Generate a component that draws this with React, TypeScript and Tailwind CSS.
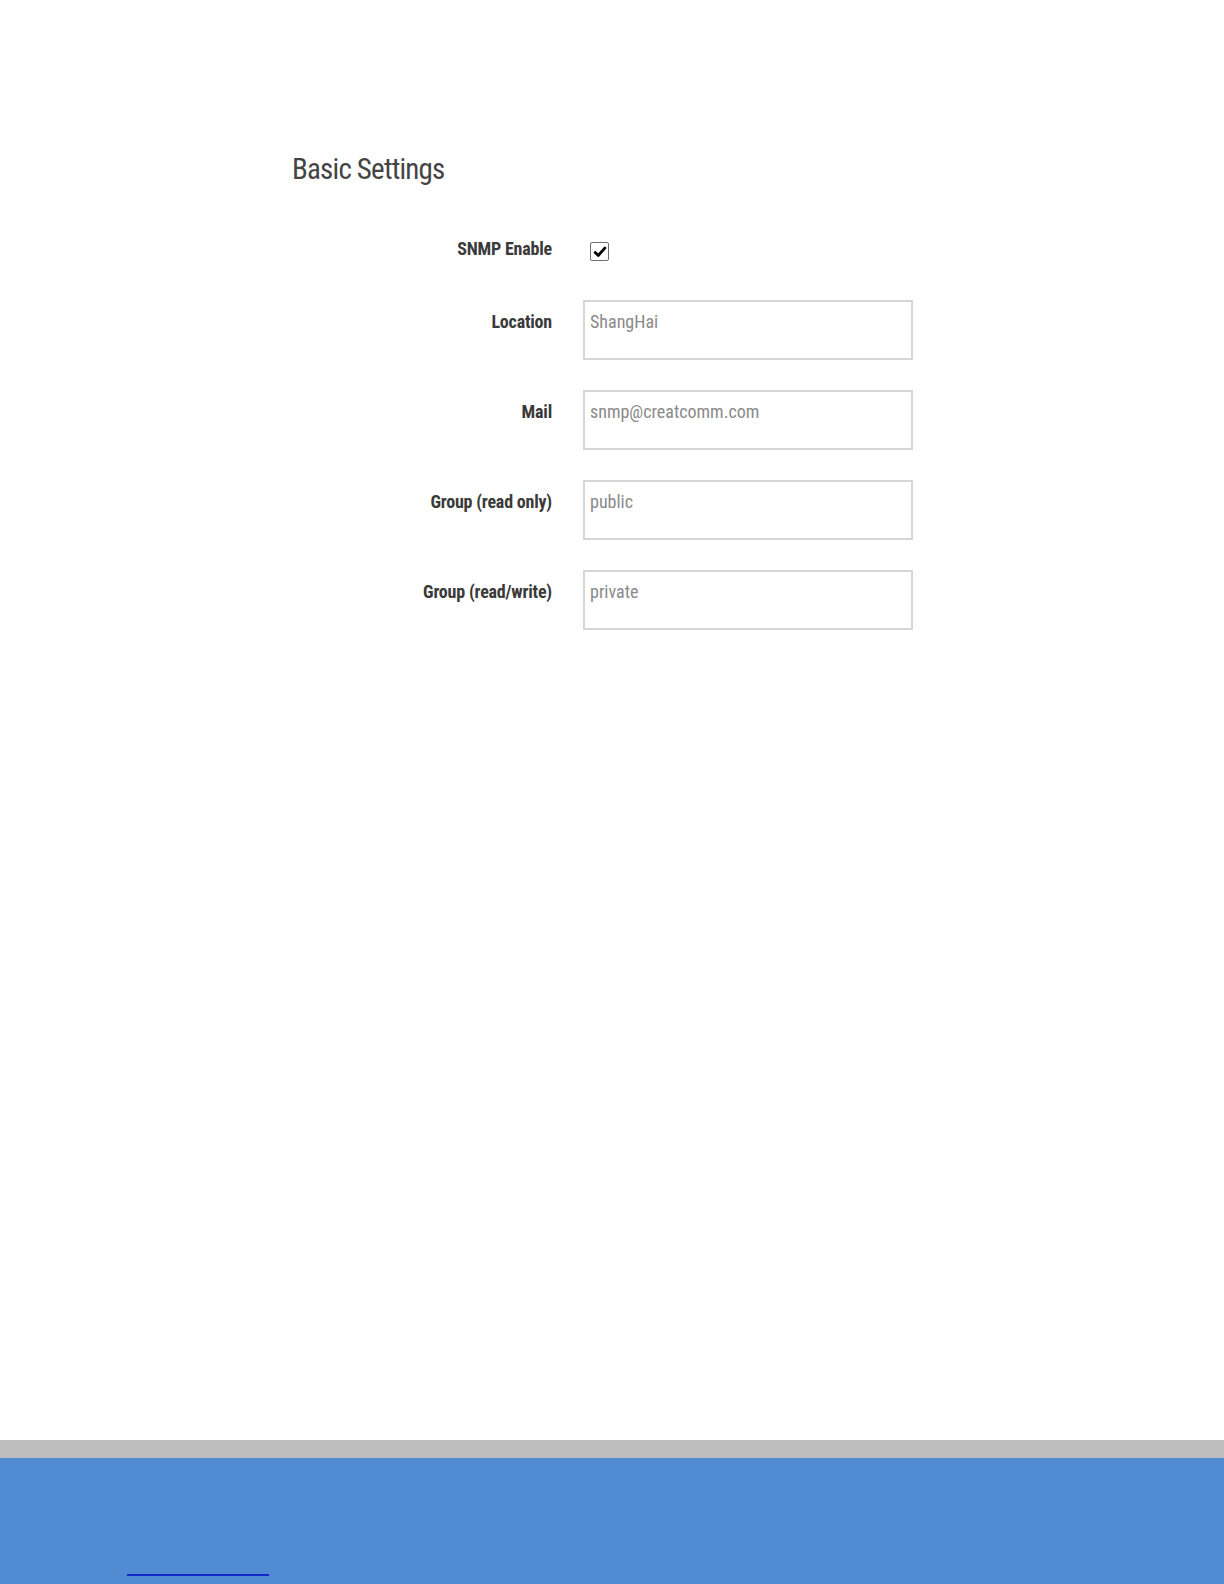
import React from 'react';

const FONT = '"Liberation Sans Narrow", "Roboto Condensed", "Liberation Sans", Arial, sans-serif';

const fields = [
  { label: 'Location', value: 'ShangHai', mt: 'mt-[39px]' },
  { label: 'Mail', value: 'snmp@creatcomm.com', mt: 'mt-[30px]' },
  { label: 'Group (read only)', value: 'public', mt: 'mt-[30px]' },
  { label: 'Group (read/write)', value: 'private', mt: 'mt-[30px]' },
];

const App: React.FC = () => {
  return (
    <div className="flex flex-col h-[1584px] w-[1224px] bg-white" style={{ fontFamily: FONT }}>
      <main className="flex-1 pt-[155px] pl-[292px]">
        <h2 className="text-[29px] leading-[29px] text-[#444] tracking-[-0.8px]">Basic Settings</h2>

        <div className="mt-[55px] flex flex-col">
          {/* SNMP enable */}
          <div className="flex items-start">
            <div className="w-[260px] text-right text-[18px] leading-[20px] font-bold text-[#3a3a3a] tracking-[-0.2px]">SNMP Enable</div>
            <div className="ml-[38px] mt-[3px] w-[19px] h-[19px] border-[1.5px] border-[#6f6f6f] rounded-[2px] bg-white flex items-center justify-center">
              <svg viewBox="0 0 16 16" className="w-[14px] h-[14px]">
                <path d="M2.5 8.5 L6 12 L13.5 3.5" fill="none" stroke="#000" strokeWidth="3.2" strokeLinecap="round" strokeLinejoin="round" />
              </svg>
            </div>
          </div>

          {fields.map((f) => (
            <div key={f.label} className={`flex items-start ${f.mt}`}>
              <div className="w-[260px] pt-[12px] text-right text-[18px] leading-[20px] font-bold text-[#3a3a3a] tracking-[-0.2px]">{f.label}</div>
              <div className="ml-[31px] w-[330px] h-[60px] border-2 border-[#d6d6d6] bg-white pt-[10px] pl-[5px] text-[18px] leading-[20px] text-[#8a8a8a]">
                {f.value}
              </div>
            </div>
          ))}
        </div>
      </main>

      <footer>
        <div className="h-[18px] bg-[#bebebe]" />
        <div className="h-[126px] bg-[#518cd2] pt-[116px]">
          <div className="ml-[127px] w-[142px] h-[2px] bg-[#1428c8]" />
        </div>
      </footer>
    </div>
  );
};

export default App;
